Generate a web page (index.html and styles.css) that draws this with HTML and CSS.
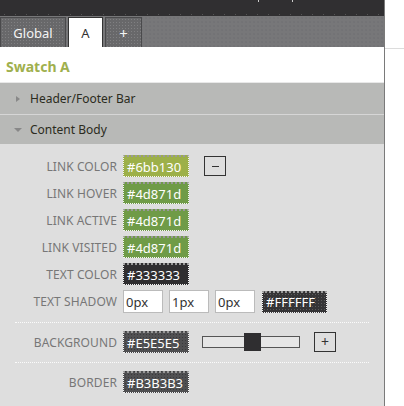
FILE: index.html
```html
<!DOCTYPE html>
<html>
<head>
<meta charset="utf-8">
<link rel="stylesheet" href="styles.css">
</head>
<body>
<div class="page">
  <div class="panel">
    <div class="topbar"><span class="tick t1"></span><span class="tick t2"></span></div>
    <div class="tabs">
      <div class="tab">Global</div>
      <div class="tab active">A</div>
      <div class="tab add">+</div>
    </div>
    <div class="title">Swatch A</div>
    <div class="section closed"><span class="arrow-right"></span>Header/Footer Bar</div>
    <div class="section open"><span class="arrow-down"></span>Content Body</div>
    <div class="content">
      <div class="row">
        <div class="label">LINK COLOR</div>
        <div class="swatch lime">#6bb130</div>
        <div class="btn minus"><span></span></div>
      </div>
      <div class="row">
        <div class="label">LINK HOVER</div>
        <div class="swatch green">#4d871d</div>
      </div>
      <div class="row">
        <div class="label">LINK ACTIVE</div>
        <div class="swatch green">#4d871d</div>
      </div>
      <div class="row">
        <div class="label">LINK VISITED</div>
        <div class="swatch green">#4d871d</div>
      </div>
      <div class="row">
        <div class="label">TEXT COLOR</div>
        <div class="swatch dark">#333333</div>
      </div>
      <div class="row shadow">
        <div class="label">TEXT SHADOW</div>
        <div class="inputs">
          <div class="input">0px</div>
          <div class="input">1px</div>
          <div class="input">0px</div>
          <div class="swatch dark dotted">#FFFFFF</div>
        </div>
      </div>
      <div class="sep"></div>
      <div class="row bg">
        <div class="label">BACKGROUND</div>
        <div class="swatch gray">#E5E5E5</div>
        <div class="slider"><div class="handle"></div></div>
        <div class="btn plus">+</div>
      </div>
      <div class="sep"></div>
      <div class="row">
        <div class="label">BORDER</div>
        <div class="swatch gray">#B3B3B3</div>
      </div>
    </div>
  </div>
  <div class="side"></div>
</div>
</body>
</html>
```

FILE: styles.css
```css
* { box-sizing: border-box; }
html, body { margin: 0; padding: 0; background: #fff; }
body { font-family: "Noto Sans", "Open Sans", sans-serif; overflow: hidden; }
.page { display: flex; width: 404px; height: 406px; }
.panel { width: 385px; height: 406px; border-right: 1px solid #7a7a7a; background: #dedede; display: flex; flex-direction: column; }
.side { flex: 1; margin-top: 48px; border-top: 1px solid #dcdcdc; height: 1px; }

.topbar { height: 16px; background: #302f31; position: relative;
  background-image: radial-gradient(circle, #555 0.6px, transparent 0.9px);
  background-size: 11px 3px; background-position: 10px 13px; background-repeat: repeat-x; }
.tick { position: absolute; top: 0; width: 1px; height: 2px; background: #ccc; }
.t1 { left: 258px; } .t2 { left: 292px; }

.tabs { height: 31px; background-color: #777779; display: flex; gap: 2px; padding-top: 1px;
  background-image: radial-gradient(circle, #6a6a6c 0.5px, transparent 0.8px);
  background-size: 4px 4px; }
.tab { height: 30px; width: 66px; display: flex; align-items: center; justify-content: center;
  color: #f4f4f4; font-size: 13px; background: #68686a; border: 1px solid #4a4a4c; border-bottom: none;
  background-image: radial-gradient(circle, #808082 0.5px, transparent 0.8px); background-size: 3px 3px; }
.tab.active { width: 35px; background: #fff; color: #333; border: 1px solid #333; border-bottom: none; }
.tab.add { width: 37px; font-size: 15px; }

.title { height: 36px; background: #fff; color: #9fb04e; font-weight: bold; font-size: 14px;
  padding-left: 6px; padding-top: 10px; border-bottom: 1px solid #e8e8e8; }

.section { height: 31px; background: #b8b9b7; color: #2b2b20; font-size: 12px; display: flex; align-items: center; padding-left: 30px; position: relative; }
.section.closed { border-bottom: 1px solid #d6d6d6; height: 32px; }
.section.open { height: 29px; }
.arrow-right { position: absolute; left: 16px; top: 50%; margin-top: -3px; width: 0; height: 0;
  border-left: 4px solid #888; border-top: 3px solid transparent; border-bottom: 3px solid transparent; }
.arrow-down { position: absolute; left: 14px; top: 50%; margin-top: -2px; width: 0; height: 0;
  border-top: 4px solid #888; border-left: 4px solid transparent; border-right: 4px solid transparent; }

.content { padding-top: 11px; flex: 1; }
.row { display: flex; align-items: center; height: 22px; margin-bottom: 5px; }
.row.shadow { height: 23px; margin-bottom: 0; }
.label { width: 117px; text-align: right; color: #777; font-size: 12px; letter-spacing: 0.1px; margin-right: 6px; white-space: nowrap; }
.swatch { width: 66px; height: 22px; color: #fff; font-size: 13px; padding-left: 3px; display: flex; align-items: center;
  border: 1px dotted #f4f4f4; border-top: 2px dotted #999; }
.lime { background-color: #a3b54e; background-image: radial-gradient(circle, #8ea53c 0.5px, transparent 0.8px); background-size: 2px 2px; }
.green { background: #6f9b47; }
.dark { background: #2f2e30; }
.gray { background-color: #505052; background-image: radial-gradient(circle, #3a3a3c 0.5px, transparent 0.8px); background-size: 3px 3px; }
.dotted { width: 65px; height: 22px; background-color: #353436; background-image: radial-gradient(circle, #5a5a5a 0.5px, transparent 0.8px); background-size: 3px 3px; }

.btn { width: 22px; height: 20px; border: 1px solid #333; display: flex; align-items: center; justify-content: center; }
.minus { margin-left: 15px; }
.minus span { width: 7px; height: 1px; background: #333; }

.inputs { display: flex; gap: 6px; align-items: center; }
.input { width: 40px; height: 23px; background: #fff; border: 1px solid #bbb; font-size: 13px; color: #333; padding-left: 2px; display: flex; align-items: center; }
.inputs .swatch { margin-left: 1px; }

.sep { margin: 9px 15px 8px 15px; height: 1px; border-top: 1px dotted #fbfbfb; width: 354px; }
.row.bg { margin-bottom: 0; }
.slider { margin-left: 13px; width: 98px; height: 12px; border: 1px solid #555; background: #e6e6e6; position: relative; }
.handle { position: absolute; left: 41px; top: -4px; width: 17px; height: 18px; background: #2f2e30; }
.plus { margin-left: 14px; font-size: 14px; color: #333; padding-bottom: 1px; }
```
